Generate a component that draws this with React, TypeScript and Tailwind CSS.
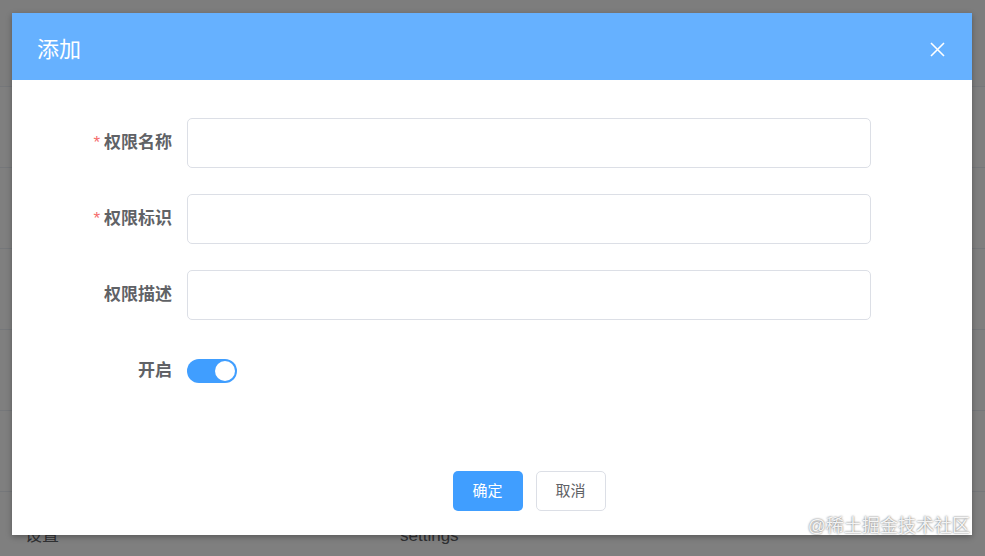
import React from "react";

const font = {
  fontFamily: '"Liberation Sans", "Noto Sans CJK SC", sans-serif',
};

const fields = [
  { label: "权限名称", required: true },
  { label: "权限标识", required: true },
  { label: "权限描述", required: false },
];

const rows = ["", "", "", "", "", "设置"];

function BackgroundTable() {
  return (
    <div className="w-full bg-white">
      <div className="h-[87px] border-b border-[#ebeef5] bg-[#fafafa]" />
      {rows.map((name, i) => (
        <div
          key={i}
          className="flex h-[81px] items-center border-b border-[#ebeef5] pt-[8px] text-[17px] text-[#606266]"
        >
          <div className="w-[400px] pl-[25px]">{name}</div>
          <div>{name ? "settings" : ""}</div>
        </div>
      ))}
    </div>
  );
}

export default function App() {
  return (
    <div className="relative h-[556px] w-[985px] overflow-hidden" style={font}>
      <BackgroundTable />

      {/* overlay */}
      <div className="absolute inset-0 bg-black/50" />

      {/* dialog */}
      <div className="absolute left-[12px] top-[13px] flex h-[522px] w-[960px] flex-col bg-white shadow-[0_2px_6px_rgba(0,0,0,0.3)]">
        <div className="flex h-[67px] items-center justify-between bg-[#66b1ff] pl-[25px] pr-[27px] pt-[5px]">
          <span className="text-[22px] text-white">添加</span>
          <svg width="15" height="15" viewBox="0 0 15 15" className="text-white">
            <path d="M1 1L14 14M14 1L1 14" stroke="currentColor" strokeWidth="1.6" />
          </svg>
        </div>

        <div className="flex flex-col gap-[26px] pt-[38px]">
          {fields.map((f) => (
            <div key={f.label} className="flex h-[50px] items-center">
              <label className="w-[175px] pr-[15px] text-right text-[17px] font-bold text-[#606266]">
                {f.required && <span className="mr-[4px] font-normal text-[#f56c6c]">*</span>}
                {f.label}
              </label>
              <div className="h-[50px] w-[684px] rounded-[5px] border border-[#dcdfe6] bg-white" />
            </div>
          ))}
          <div className="flex h-[50px] items-center">
            <label className="w-[175px] pr-[15px] text-right text-[17px] font-bold text-[#606266]">
              开启
            </label>
            <div className="flex h-[24px] w-[50px] items-center justify-end rounded-full bg-[#409eff] pr-[2px]">
              <div className="h-[20px] w-[20px] rounded-full bg-white" />
            </div>
          </div>
        </div>

        <div className="mt-auto mb-[24px] flex">
          <div className="w-[175px]" />
          <div className="flex w-[684px] justify-center gap-[13px]">
            <button className="h-[40px] w-[70px] rounded-[5px] bg-[#409eff] text-[15px] text-white">
              确定
            </button>
            <button className="h-[40px] w-[70px] rounded-[5px] border border-[#dcdfe6] bg-white text-[15px] text-[#606266]">
              取消
            </button>
          </div>
        </div>
      </div>

      {/* watermark */}
      <div className="absolute bottom-[16px] right-[15px] text-[18px] text-white/90 [text-shadow:0_0_2px_rgba(0,0,0,0.7)]">
        @稀土掘金技术社区
      </div>
    </div>
  );
}
